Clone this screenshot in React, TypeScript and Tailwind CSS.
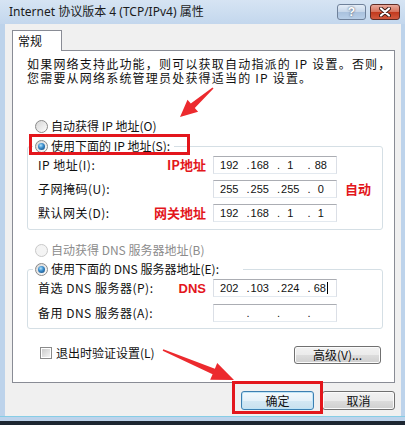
import type { ReactNode } from "react"

const CJK = "font-['Noto_Sans_CJK_SC',sans-serif]"

function arrowPoints(
  x1: number,
  y1: number,
  x2: number,
  y2: number,
  headLen: number,
  headHalf: number,
  neckHalf: number,
  tailHalf: number
) {
  const len = Math.hypot(x2 - x1, y2 - y1)
  const ux = (x2 - x1) / len
  const uy = (y2 - y1) / len
  const nx = -uy
  const ny = ux
  const bx = x2 - ux * headLen
  const by = y2 - uy * headLen
  const pts = [
    [x1 + nx * tailHalf, y1 + ny * tailHalf],
    [bx + nx * neckHalf, by + ny * neckHalf],
    [bx + nx * headHalf, by + ny * headHalf],
    [x2, y2],
    [bx - nx * headHalf, by - ny * headHalf],
    [bx - nx * neckHalf, by - ny * neckHalf],
    [x1 - nx * tailHalf, y1 - ny * tailHalf],
  ]
  return pts.map((p) => `${p[0].toFixed(1)},${p[1].toFixed(1)}`).join(" ")
}

function Radio({ checked, disabled }: { checked?: boolean; disabled?: boolean }) {
  return (
    <span
      className={`flex h-[13px] w-[13px] shrink-0 items-center justify-center rounded-full border ${
        disabled
          ? "border-[#c9c9c9] bg-[#f4f4f4]"
          : "border-[#8a8a8a] bg-gradient-to-br from-[#d6d6d6] to-[#fdfdfd]"
      }`}
    >
      {checked && (
        <span className="h-[7px] w-[7px] rounded-full bg-[radial-gradient(circle_at_40%_35%,#b5e4fa,#3d8fcf_40%,#0f3f6e)]" />
      )}
    </span>
  )
}

function RadioRow({
  label,
  checked,
  disabled,
}: {
  label: string
  checked?: boolean
  disabled?: boolean
}) {
  return (
    <div className="flex h-[16px] items-center gap-[3px]">
      <Radio checked={checked} disabled={disabled} />
      <span className={disabled ? "text-[#8c8c8c]" : "text-[#111]"}>{label}</span>
    </div>
  )
}

function IpBox({ parts, cursor }: { parts: string[]; cursor?: boolean }) {
  return (
    <div className="flex h-[18px] w-[124px] items-center border border-[#abadb3] border-r-[#dbdfe6] border-b-[#e3e9ef] border-l-[#dbdfe6] bg-white font-['Liberation_Sans',sans-serif] text-[11px] leading-[16px] text-[#111]">
      {parts.map((p, i) =>
        i === 0 ? (
          <span key={i} className="flex-1 text-center">
            {p}
          </span>
        ) : (
          <span key={i} className="flex flex-1 items-center">
            <span className="w-[5px] text-right">.</span>
            <span className="flex flex-1 items-center justify-center pr-[5px]">
              {p}
              {cursor && i === parts.length - 1 && (
                <span className="ml-px h-[12px] w-px bg-black" />
              )}
            </span>
          </span>
        )
      )}
    </div>
  )
}

function FieldRow({
  label,
  note,
  parts,
  after,
  cursor,
}: {
  label: string
  note?: ReactNode
  parts: string[]
  after?: string
  cursor?: boolean
}) {
  return (
    <div className="flex h-[18px] items-center">
      <div className="flex w-[175px] items-center justify-between pr-[7px]">
        <span className="tracking-[0.5px]">{label}</span>
        {note && (
          <span className="text-[13px] font-bold leading-[16px] text-[#e3161c]">{note}</span>
        )}
      </div>
      <IpBox parts={parts} cursor={cursor} />
      {after && (
        <span className="ml-[8px] text-[13px] font-bold text-[#e3161c]">{after}</span>
      )}
    </div>
  )
}

function WinButton({
  children,
  isDefault,
  className,
}: {
  children: ReactNode
  isDefault?: boolean
  className: string
}) {
  return (
    <div
      className={`flex items-center justify-center rounded-[3px] border text-[12px] text-[#111] ${
        isDefault
          ? "border-[#3c7fb1] bg-[linear-gradient(#f3f9fd,#e5f1f9_50%,#d4e8f4_50%,#c9e0ee)] shadow-[inset_0_0_0_1px_#bfe4f7]"
          : "border-[#707070] bg-[linear-gradient(#f2f2f2,#ebebeb_50%,#dddddd_50%,#cfcfcf)] shadow-[inset_0_0_0_1px_#fbfbfb]"
      } ${className}`}
    >
      {children}
    </div>
  )
}

export default function App() {
  return (
    <div
      className={`relative flex h-[425px] w-[405px] flex-col overflow-hidden bg-[#bdd3eb] ${CJK} text-[12px] leading-[16px] text-[#111]`}
    >
      {/* title bar */}
      <div className="flex h-[24px] shrink-0 items-center bg-gradient-to-b from-[#d6e4f3] to-[#c3d7ed] pr-[5px] pl-[9px]">
        <span className="font-['Noto_Sans','Noto_Sans_CJK_SC',sans-serif] text-[12px] text-[#1b1b1b]">
          Internet 协议版本 4 (TCP/IPv4) 属性
        </span>
        <div className="ml-auto flex gap-[4px]">
          <div className="flex h-[16px] w-[29px] items-center justify-center rounded-[3px] border border-[#6f819a] bg-[linear-gradient(#e4edf7,#c6d6e9_50%,#a9c1dd_50%,#b8cfe8)] font-['Liberation_Sans',sans-serif] text-[12px] font-bold text-white [text-shadow:0_0_2px_#2b3a4e]">
            ?
          </div>
          <div className="flex h-[16px] w-[30px] items-center justify-center rounded-[3px] border border-[#5e2b24] bg-[linear-gradient(#e9a99b,#d66f58_50%,#c1381c_50%,#d2593e)]">
            <svg width="12" height="10" viewBox="0 0 12 10">
              <path
                d="M2 1.5 L10 8.5 M10 1.5 L2 8.5"
                stroke="#3a1a14"
                strokeWidth="4"
                strokeLinecap="round"
              />
              <path
                d="M2 1.5 L10 8.5 M10 1.5 L2 8.5"
                stroke="#fff"
                strokeWidth="2.2"
                strokeLinecap="round"
              />
            </svg>
          </div>
        </div>
      </div>

      {/* body */}
      <div className="ml-[5px] mr-[4px] flex flex-1 flex-col bg-[#f0f0f0] pt-[6px] pr-[6px] pl-[7px]">
        <div className="relative z-10 -mb-px flex h-[21px] w-[50px] items-center border border-b-0 border-[#898c95] bg-white pl-[5px]">
          常规
        </div>
        <div className="flex h-[333px] flex-col border border-[#898c95] bg-white pt-[6px] pr-[11px] pl-[14px]">
          <div className="leading-[14px] tracking-[1.2px] whitespace-nowrap">
            <div>如果网络支持此功能，则可以获取自动指派的 IP 设置。否则，</div>
            <div>您需要从网络系统管理员处获得适当的 IP 设置。</div>
          </div>

          <div className="mt-[33px] pl-[8px]">
            <RadioRow label="自动获得 IP 地址(O)" />
          </div>

          <fieldset className="mt-[4px] rounded-[3px] border border-[#d5dfe5] pb-[7px] pl-[5px]">
            <legend className="pr-[4px] pl-[2px]">
              <RadioRow label="使用下面的 IP 地址(S):" checked />
            </legend>
            <div className="mt-[2px] ml-[5px] flex flex-col gap-[6px]">
              <FieldRow label="IP 地址(I):" note="IP地址" parts={["192", "168", "1", "88"]} />
              <FieldRow label="子网掩码(U):" parts={["255", "255", "255", "0"]} after="自动" />
              <FieldRow label="默认网关(D):" note="网关地址" parts={["192", "168", "1", "1"]} />
            </div>
          </fieldset>

          <div className="mt-[12px] pl-[8px]">
            <RadioRow label="自动获得 DNS 服务器地址(B)" disabled />
          </div>

          <fieldset className="mt-[3px] rounded-[3px] border border-[#d5dfe5] pb-[6px] pl-[5px]">
            <legend className="pr-[24px] pl-[2px]">
              <RadioRow label="使用下面的 DNS 服务器地址(E):" checked />
            </legend>
            <div className="mt-[2px] ml-[5px] flex flex-col gap-[7px]">
              <FieldRow
                label="首选 DNS 服务器(P):"
                note={<span className="font-['Liberation_Sans',sans-serif]">DNS</span>}
                parts={["202", "103", "224", "68"]}
                cursor
              />
              <FieldRow label="备用 DNS 服务器(A):" parts={["", "", "", ""]} />
            </div>
          </fieldset>

          <div className="mt-[17px] mr-[2px] flex items-start justify-between">
            <div className="ml-[13px] flex h-[13px] items-center gap-[4px]">
              <span className="flex h-[12px] w-[12px] items-center justify-center border border-[#8a8a8a] bg-white">
                <span className="h-[8px] w-[8px] bg-gradient-to-br from-[#cbcbcb] to-[#f4f4f4]" />
              </span>
              <span>退出时验证设置(L)</span>
            </div>
            <WinButton className="h-[18px] w-[87px]">高级(V)...</WinButton>
          </div>
        </div>

        <div className="mt-[8px] flex justify-end gap-[8px]">
          <WinButton isDefault className="h-[19px] w-[73px]">
            确定
          </WinButton>
          <WinButton className="h-[19px] w-[73px]">取消</WinButton>
        </div>
      </div>

      {/* bottom frame */}
      <div className="h-[5px] shrink-0 border-t border-[#86cde6]" />
      <div className="h-[4px] shrink-0 bg-[#1d2631]" />

      {/* annotations */}
      <div className="absolute top-[134px] left-[29px] h-[21px] w-[161px] border-[3px] border-[#e3161c]" />
      <div className="absolute top-[381px] left-[232px] h-[33px] w-[91px] border-[3px] border-[#e3161c]" />
      <svg className="pointer-events-none absolute inset-0" width="405" height="425">
        <polygon points={arrowPoints(213, 88, 180, 117, 17, 8, 3, 0.8)} fill="#ec2a2e" />
        <polygon points={arrowPoints(163, 350, 234, 380, 22, 9, 3, 0.8)} fill="#ec2a2e" />
      </svg>
    </div>
  )
}
